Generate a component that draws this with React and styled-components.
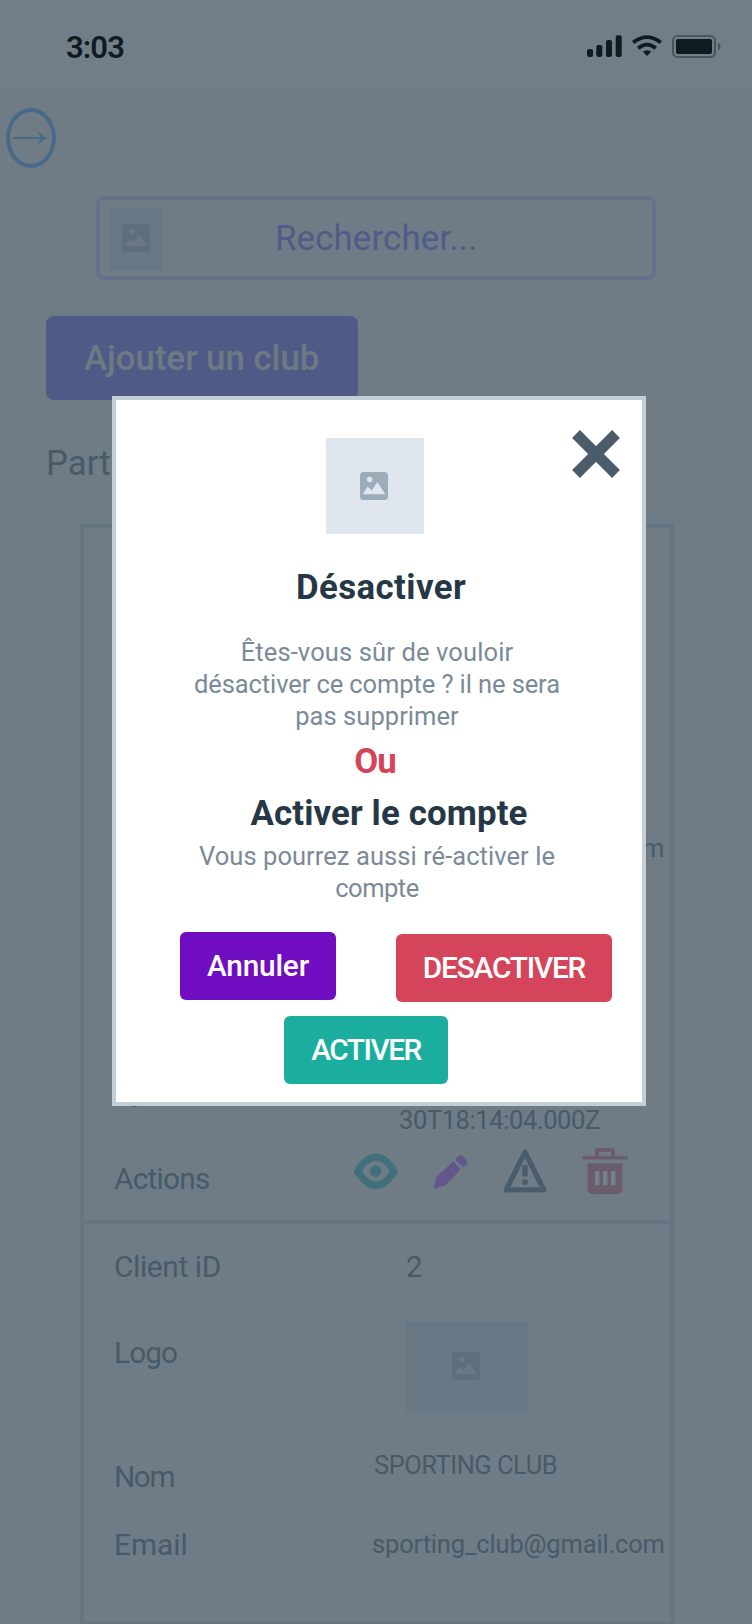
import React from "react";
import styled, { createGlobalStyle } from "styled-components";

const GlobalStyle = createGlobalStyle`
  *, *::before, *::after { box-sizing: border-box; }
  html, body { margin: 0; padding: 0; background: #6f7c86; }
  body { font-family: Roboto, "Liberation Sans", sans-serif; overflow: hidden; }
  svg { display: block; flex: none; }
`;

const Screen = styled.main`
  position: relative;
  width: 752px;
  height: 1624px;
  overflow: hidden;
  background: #6f7c86;
  color: #475a69;
`;

const StatusBar = styled.header`
  height: 88px;
  display: flex;
  align-items: flex-start;
  justify-content: space-between;
  padding: 27px 31px 0 66px;
  background: #717e88;
`;

const Clock = styled.time`
  padding-top: 1px;
  font-size: 31px;
  line-height: 40px;
  font-weight: 600;
  letter-spacing: -0.9px;
  color: #101a21;
`;

const StatusIcons = styled.div`
  display: flex;
  gap: 10px;
  padding-top: 8px;
`;

const BackButton = styled.button`
  display: flex;
  align-items: center;
  justify-content: center;
  width: 50px;
  height: 60px;
  margin: 20px 0 0 6px;
  padding: 0;
  border: 4px solid #486a88;
  border-radius: 50%;
  background: none;
`;

const SearchField = styled.div`
  display: flex;
  width: 560px;
  height: 84px;
  margin: 28px 0 0 96px;
  padding: 8px 10px;
  border: 4px solid #66708a;
  border-radius: 8px;
`;

const SearchText = styled.span`
  margin-left: 113px;
  padding-top: 10px;
  font-size: 34.8px;
  line-height: 40px;
  letter-spacing: 0.15px;
  color: #515b89;
`;

const Placeholder = styled.div`
  flex: none;
  width: ${(p) => p.$w}px;
  height: ${(p) => p.$h}px;
  padding: ${(p) => p.$pad};
  background: ${(p) => (p.$light ? "#dfe6ee" : "#677783")};
`;

const AddButton = styled.button`
  display: block;
  width: 312px;
  height: 84px;
  margin: 36px 0 0 46px;
  padding: 0 0 0 38px;
  border: 0;
  border-radius: 8px;
  background: #505a86;
  color: #6c7a84;
  font: 500 34.8px/84px Roboto, sans-serif;
  text-align: left;
`;

const Heading = styled.h1`
  margin: 43px 0 41px 46px;
  font-size: 34.8px;
  line-height: 40px;
  font-weight: 400;
`;

const Table = styled.section`
  width: 594px;
  margin-left: 80px;
  border: 4px solid #657584;
`;

const Record = styled.div`
  padding-top: ${(p) => p.$top || 0}px;
  & + & { border-top: 4px solid #657584; }
`;

const Row = styled.div`
  display: flex;
  align-items: flex-start;
  height: ${(p) => p.$h}px;
`;

const Label = styled.span`
  flex: 0 0 270px;
  padding: ${(p) => p.$top}px 0 0 30px;
  font-size: 29.8px;
  line-height: 40px;
  letter-spacing: ${(p) => p.$ls || 0}px;
`;

const Value = styled.div`
  padding: ${(p) => p.$top}px 0 0 ${(p) => p.$left}px;
  font-size: ${(p) => p.$size || 25.5}px;
  line-height: 40px;
  letter-spacing: ${(p) => p.$ls || 0}px;
  white-space: nowrap;
`;

const Actions = styled.div`
  display: flex;
  align-items: center;
  gap: 34.6px;
  height: 46px;
  margin-top: 8px;
`;

const Dialog = styled.div`
  position: absolute;
  left: 112px;
  top: 396px;
  width: 534px;
  height: 710px;
  border: 4px solid #c2ced8;
  background: #fff;
`;

const DialogBody = styled.div`
  display: flex;
  flex-direction: column;
  align-items: center;
  width: 518px;
  padding-top: 38px;
  text-align: center;
`;

const CloseButton = styled.button`
  position: absolute;
  top: 30px;
  right: 22px;
  padding: 0;
  border: 0;
  background: none;
`;

const DialogTitle = styled.h2`
  margin: ${(p) => p.$gap}px 0 0 ${(p) => p.$shift || 0}px;
  font-size: 34.8px;
  line-height: 40px;
  font-weight: 700;
  letter-spacing: ${(p) => p.$ls || 0}px;
  color: ${(p) => (p.$danger ? "#d4455b" : "#263746")};
`;

const DialogText = styled.p`
  margin: ${(p) => p.$gap}px 0 0 4px;
  font-size: 25.5px;
  line-height: 32px;
  color: #7b8a98;
`;

const Line = styled.span`
  display: block;
  letter-spacing: ${(p) => p.$ls}px;
`;

const ButtonRow = styled.div`
  display: flex;
  align-items: flex-start;
  justify-content: space-between;
  height: 70px;
  margin: 28px 30px 0 64px;
`;

const Button = styled.button`
  display: block;
  width: ${(p) => p.$w}px;
  height: 68px;
  margin: ${(p) => p.$margin || 0};
  padding: 0;
  border: 0;
  border-radius: 6px;
  background: ${(p) => p.$bg};
  color: #fff;
  font: 500 29.8px/68px Roboto, sans-serif;
  letter-spacing: ${(p) => p.$ls}px;
`;

const ImageIcon = ({ fill, cut }) => (
  <svg width="28" height="28" viewBox="0 0 28 28">
    <rect width="28" height="28" rx="3.5" fill={fill} />
    <circle cx="9.6" cy="7.5" r="2.8" fill={cut} />
    <path d="M2.7 22.2 7.7 14.6l4 4L17.4 9.9l7.9 12.3z" fill={cut} />
  </svg>
);

const SignalIcon = () => (
  <svg width="35" height="22" viewBox="0 0 35 22" fill="#101a21">
    <rect x="0" y="14" width="6" height="8" rx="2" />
    <rect x="9.3" y="10" width="6" height="12" rx="2" />
    <rect x="19" y="5" width="6" height="17" rx="2" />
    <rect x="28.7" y="0.3" width="6" height="21.7" rx="2" />
  </svg>
);

const WifiIcon = () => (
  <svg width="30" height="22" viewBox="0 0 30 22" fill="none" stroke="#101a21" strokeWidth="3.8">
    <path d="M1.2 7.6Q15-3.4 28.8 7.6" />
    <path d="M6.2 13.3Q15 5.9 23.8 13.3" />
    <path d="M10.8 16.8Q15 13.6 19.2 16.8L15 21z" fill="#101a21" stroke="none" />
  </svg>
);

const BatteryIcon = () => (
  <svg width="49" height="23" viewBox="0 0 49 23">
    <rect x="1" y="1" width="42" height="21" rx="4.5" fill="none" stroke="#4a555e" strokeWidth="2" />
    <rect x="4" y="4" width="36" height="15" rx="2" fill="#101a21" />
    <path d="M46 7.5Q48.6 9 48.6 11.5T46 15.5z" fill="#4a555e" />
  </svg>
);

const ArrowIcon = () => (
  <svg width="36" height="14" viewBox="0 0 36 14">
    <path d="M1 7H31" stroke="#486a88" strokeWidth="2" strokeLinecap="round" />
    <path d="M26 .5Q29 5 35 7 29 9 26 13.5q-1-.2-.5-1.4L28.2 7 25.5 1.9Q25.200.8 26 .5z" fill="#486a88" />
  </svg>
);

const EyeIcon = () => (
  <svg width="44" height="37" viewBox="0 0 44 37" fill="#41707a">
    <path
      fillRule="evenodd"
      d="M.3 16.7C5.5 8.500 12.500.5 22 .5S38.500 8.500 43.400 16.700q.9 1.600 0 3.200C38.500 28 31.500 36 22 36S5.500 28 .3 19.900q-.6-1.600 0-3.200zM8 18.300C11.500 23.500 16 28.800 22 28.800s10.500-5.300 13.700-10.500C32.500 13 28 7.800 22 7.800S11.500 13 8 18.300z"
    />
    <circle cx="21.7" cy="18.2" r="5.7" />
  </svg>
);

const PencilIcon = () => (
  <svg width="36" height="36" viewBox="0 0 36 36" fill="#62568a">
    <path d="M.8 35.800 3 24.300 20.500 8.200l7 8.200L12.200 32.500z" />
    <path d="M22 6.600 26.200 2.600q1.500-1 3 .2l4.500 5q1.500 1.500.2 3L30 14.500z" />
  </svg>
);

const WarningIcon = () => (
  <svg width="44" height="44" viewBox="0 0 44 44">
    <path d="M22 3.200 40.800 40.800H3.200z" fill="none" stroke="#4a5d6c" strokeWidth="5.2" strokeLinejoin="round" />
    <rect x="19.3" y="16.3" width="5.4" height="11.2" fill="#4a5d6c" />
    <circle cx="22" cy="33" r="3" fill="#4a5d6c" />
  </svg>
);

const TrashIcon = () => (
  <svg width="46" height="46" viewBox="0 0 46 46">
    <path d="M15 8V3.500Q15 2 16.500 2h14Q31 2 31 3.500V8" fill="none" stroke="#6b5c6c" strokeWidth="4" />
    <rect x="0" y="8" width="46" height="3.4" rx="1.7" fill="#6b5c6c" />
    <path d="M5.500 15.300h35V40q0 6-6 6h-23q-6 0-6-6z" fill="#6b5c6c" />
    <g fill="#74818b">
      <rect x="13" y="23" width="4.5" height="14" />
      <rect x="21" y="23" width="4.5" height="14" />
      <rect x="29" y="23" width="4.5" height="14" />
    </g>
  </svg>
);

const CloseIcon = () => (
  <svg width="48" height="48" viewBox="0 0 48 48">
    <path d="M4 4 44 44M44 4 4 44" stroke="#4a5b69" strokeWidth="11" />
  </svg>
);

export default function App() {
  return (
    <Screen>
      <GlobalStyle />
      <StatusBar>
        <Clock>3:03</Clock>
        <StatusIcons>
          <SignalIcon />
          <WifiIcon />
          <BatteryIcon />
        </StatusIcons>
      </StatusBar>
      <BackButton aria-label="Retour">
        <ArrowIcon />
      </BackButton>
      <SearchField>
        <Placeholder $w={52} $h={62} $pad="16px 12px">
          <ImageIcon fill="#5d6e7c" cut="#6a7985" />
        </Placeholder>
        <SearchText>Rechercher...</SearchText>
      </SearchField>
      <AddButton>Ajouter un club</AddButton>
      <Heading>Part</Heading>

      <Table>
        <Record $top={300}>
          <Row $h={240}>
            <Label $top={0} />
            <Value $top={0} $left={288}>m</Value>
          </Row>
          <Row $h={72}>
            <Label $top={3}>Ajouté</Label>
            <Value $top={32} $left={45} $ls={-0.4}>30T18:14:04.000Z</Value>
          </Row>
          <Row $h={80}>
            <Label $top={19} $ls={-0.75}>Actions</Label>
            <Actions>
              <EyeIcon />
              <PencilIcon />
              <WarningIcon />
              <TrashIcon />
            </Actions>
          </Row>
        </Record>
        <Record>
          <Row $h={80}>
            <Label $top={23} $ls={-0.35}>Client iD</Label>
            <Value $top={23} $left={52} $size={29.5}>2</Value>
          </Row>
          <Row $h={130}>
            <Label $top={29} $ls={-0.9}>Logo</Label>
            <Value $top={18} $left={52}>
              <Placeholder $w={122} $h={90} $pad="30px 46px">
                <ImageIcon fill="#5d6e7c" cut="#6a7985" />
              </Placeholder>
            </Value>
          </Row>
          <Row $h={80}>
            <Label $top={23} $ls={-1.4}>Nom</Label>
            <Value $top={11} $left={20} $ls={-0.5}>SPORTING CLUB</Value>
          </Row>
          <Row $h={108}>
            <Label $top={11} $ls={0}>Email</Label>
            <Value $top={10} $left={18} $ls={-0.16}>sporting_club@gmail.com</Value>
          </Row>
        </Record>
      </Table>

      <Dialog role="dialog">
        <CloseButton aria-label="Fermer">
          <CloseIcon />
        </CloseButton>
        <DialogBody>
          <Placeholder $light $w={98} $h={96} $pad="34px">
            <ImageIcon fill="#9cacb9" cut="#dfe6ee" />
          </Placeholder>
          <DialogTitle $gap={33} $shift={12} $ls={0.42}>Désactiver</DialogTitle>
          <DialogText $gap={29}>
            <Line $ls={0.13}>Êtes-vous sûr de vouloir</Line>
            <Line $ls={-0.1}>désactiver ce compte ? il ne sera</Line>
            <Line $ls={0.06}>pas supprimer</Line>
          </DialogText>
          <DialogTitle $gap={9} $danger $ls={-0.9}>Ou</DialogTitle>
          <DialogTitle $gap={12} $shift={28} $ls={0.13}>Activer le compte</DialogTitle>
          <DialogText $gap={7}>
            <Line $ls={0.06}>Vous pourrez aussi ré-activer le</Line>
            <Line $ls={-0.5}>compte</Line>
          </DialogText>
        </DialogBody>
        <ButtonRow>
          <Button $w={156} $bg="#710dc1" $ls={-0.2}>Annuler</Button>
          <Button $w={216} $bg="#d4455b" $ls={-1.2} $margin="2px 0 0">DESACTIVER</Button>
        </ButtonRow>
        <Button $w={164} $bg="#1bae9f" $ls={-1.5} $margin="14px 0 0 168px">ACTIVER</Button>
      </Dialog>
    </Screen>
  );
}
